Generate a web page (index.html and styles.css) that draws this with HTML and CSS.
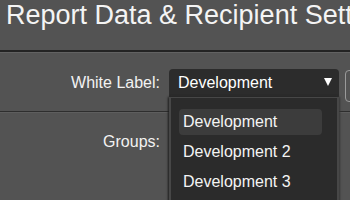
FILE: index.html
```html
<!DOCTYPE html>
<html>
<head>
<meta charset="utf-8">
<link rel="stylesheet" href="styles.css">
</head>
<body>
<div class="page">
  <header class="header">
    <h1 class="title">Report Data &amp; Recipient Settings</h1>
  </header>
  <div class="row row-first">
    <label class="label">White Label:</label>
    <div class="field">
      <div class="select">
        <span class="select-text">Development</span>
        <span class="arrow"></span>
      </div>
      <ul class="menu">
        <li class="item active">Development</li>
        <li class="item">Development 2</li>
        <li class="item">Development 3</li>
      </ul>
    </div>
    <div class="side-btn"></div>
  </div>
  <div class="row row-second">
    <label class="label">Groups:</label>
  </div>
</div>
</body>
</html>
```
FILE: styles.css
```css
html, body {
  margin: 0;
  padding: 0;
  background: #535353;
  overflow: hidden;
}
.page {
  width: 350px;
  height: 200px;
  overflow: hidden;
  font-family: "Liberation Sans", Arial, sans-serif;
  color: #f2f2f2;
}
.header {
  border-bottom: 2px solid #232323;
  box-shadow: 0 1px 0 #626262;
  padding-left: 6px;
  box-sizing: border-box;
  height: 52px;
  overflow: hidden;
}
.title {
  margin: 0;
  padding-top: 0;
  font-size: 27px;
  line-height: 30px;
  font-weight: normal;
  white-space: nowrap;
  color: #f4f4f4;
}
.row {
  display: flex;
  align-items: flex-start;
}
.row-first {
  height: 60px;
  padding-top: 17px;
  box-sizing: border-box;
  border-bottom: 1px solid #2e2e2e;
  box-shadow: 0 1px 0 #5e5e5e;
}
.label {
  width: 160px;
  text-align: right;
  font-size: 16px;
  line-height: 28px;
  color: #f2f2f2;
  flex-shrink: 0;
}
.field {
  position: relative;
  margin-left: 9px;
  width: 170px;
  flex-shrink: 0;
}
.select {
  height: 28px;
  background: #2c2c2c;
  border-radius: 4px 4px 0 0;
  display: flex;
  align-items: center;
  padding-left: 9px;
  padding-right: 7px;
  font-size: 16px;
}
.select-text {
  flex: 1;
  color: #ffffff;
}
.arrow {
  width: 0;
  height: 0;
  border-left: 4px solid transparent;
  border-right: 4px solid transparent;
  border-top: 8px solid #ffffff;
  margin-top: -2px;
}
.side-btn {
  margin-left: 6px;
  margin-top: 1px;
  width: 20px;
  height: 30px;
  border: 1px solid #9a9a9a;
  border-radius: 4px;
  flex-shrink: 0;
}
.menu {
  position: absolute;
  top: 28px;
  left: 0;
  width: 170px;
  box-sizing: border-box;
  margin: 0;
  padding: 11px 15px 10px 8px;
  list-style: none;
  background: #2b2b2b;
  border: 2px solid #474747;
  border-top-width: 1px;
  box-shadow: -1px 0 2px #1e1e1e, 1px 0 2px #3a3a3a;
  z-index: 5;
}
.item {
  height: 26px;
  line-height: 26px;
  padding-left: 4px;
  margin-bottom: 4px;
  font-size: 16px;
  color: #f4f4f4;
  border-radius: 4px;
  white-space: nowrap;
}
.item.active {
  background: #3c3c3c;
}
.row-second {
  height: 60px;
  padding-top: 16px;
  box-sizing: border-box;
}
```
